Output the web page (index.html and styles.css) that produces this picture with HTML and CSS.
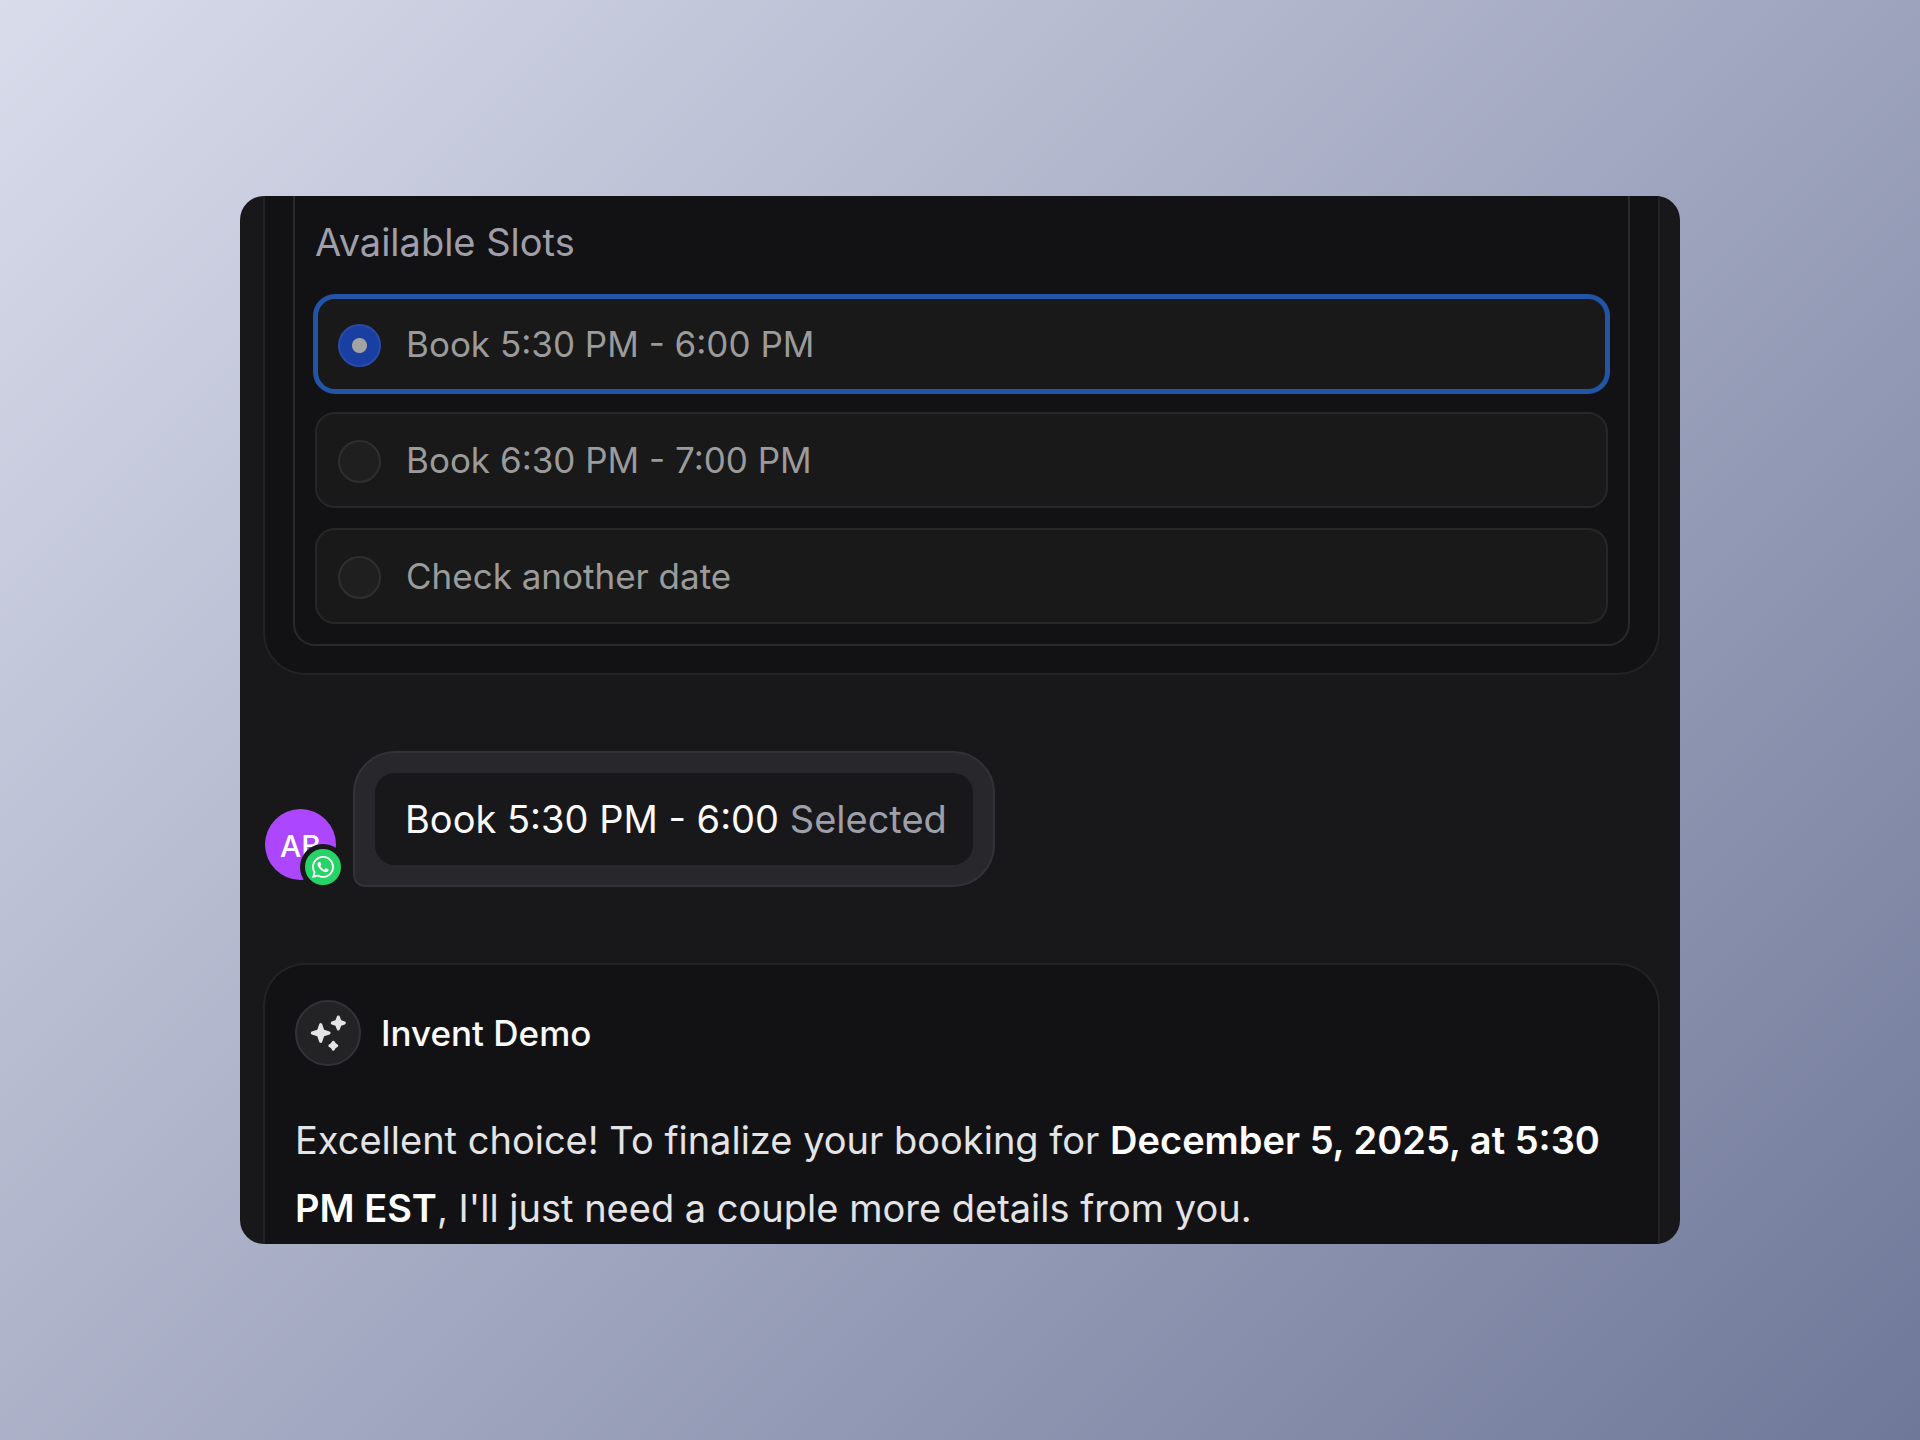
FILE: index.html
```html
<!DOCTYPE html>
<html lang="en">
<head>
  <meta charset="UTF-8" />
  <meta name="viewport" content="width=device-width, initial-scale=1.0" />
  <title>Invent Demo</title>
  <link rel="stylesheet" href="styles.css">
</head>
<body>
  <main class="chat">
    <section class="bubble slots-bubble">
      <fieldset class="slots">
        <legend class="slots-title">Available Slots</legend>
        <label class="slot" for="slot1">
          <input type="radio" id="slot1" name="slot" checked>
          <span>Book 5:30 PM - 6:00 PM</span>
        </label>
        <label class="slot" for="slot2">
          <input type="radio" id="slot2" name="slot">
          <span>Book 6:30 PM - 7:00 PM</span>
        </label>
        <label class="slot" for="slot3">
          <input type="radio" id="slot3" name="slot">
          <span>Check another date</span>
        </label>
      </fieldset>
    </section>

    <section class="reply">
      <div class="avatar">
        AB
        <span class="badge">
          <svg viewBox="0 0 24 24" fill="#fff">
            <path d="M17.472 14.382c-.297-.149-1.758-.867-2.03-.967-.273-.099-.471-.148-.67.15-.197.297-.767.966-.94 1.164-.173.199-.347.223-.644.075-.297-.15-1.255-.463-2.39-1.475-.883-.788-1.48-1.761-1.653-2.059-.173-.297-.018-.458.13-.606.134-.133.298-.347.446-.52.149-.174.198-.298.298-.497.099-.198.05-.371-.025-.52-.075-.149-.669-1.612-.916-2.207-.242-.579-.487-.5-.669-.51-.173-.008-.371-.01-.57-.01-.198 0-.52.074-.792.372-.272.297-1.04 1.016-1.04 2.479 0 1.462 1.065 2.875 1.213 3.074.149.198 2.096 3.2 5.077 4.487.709.306 1.262.489 1.694.625.712.227 1.36.195 1.871.118.571-.085 1.758-.719 2.006-1.413.248-.694.248-1.289.173-1.413-.074-.124-.272-.198-.57-.347m-5.421 7.403h-.004a9.87 9.87 0 01-5.031-1.378l-.361-.214-3.741.982.998-3.648-.235-.374a9.86 9.86 0 01-1.51-5.26c.001-5.45 4.436-9.884 9.888-9.884 2.64 0 5.122 1.03 6.988 2.898a9.825 9.825 0 012.893 6.994c-.003 5.45-4.437 9.884-9.885 9.884m8.413-18.297A11.815 11.815 0 0012.05 0C5.495 0 .16 5.335.157 11.892c0 2.096.547 4.142 1.588 5.945L.057 24l6.305-1.654a11.882 11.882 0 005.683 1.448h.005c6.554 0 11.89-5.335 11.893-11.893a11.821 11.821 0 00-3.48-8.413z"/>
          </svg>
        </span>
      </div>
      <div class="reply-bubble">
        <p class="reply-text">Book 5:30 PM - 6:00 <span class="muted">Selected</span></p>
      </div>
    </section>

    <section class="bubble message">
      <header class="sender">
        <span class="sender-icon">
          <svg viewBox="0 0 36 36" fill="#e4e4e7" stroke="#e4e4e7" stroke-width="3" stroke-linejoin="round">
            <path d="M10.700 9.600L12.900 15.800L19.100 18L12.900 20.200L10.700 26.400L8.500 20.200L2.300 18L8.500 15.800Z"/>
            <path d="M28.300 2L30 6.300L34.300 8L30 9.700L28.300 14L26.600 9.700L22.300 8L26.600 6.300Z"/>
            <path d="M23.300 27.300L24.600 29.400L26.700 30.700L24.600 32L23.300 34.100L22 32L19.900 30.700L22 29.400Z"/>
          </svg>
        </span>
        <h2 class="sender-name">Invent Demo</h2>
      </header>
      <p class="message-text">Excellent choice! To finalize your booking for <strong>December 5, 2025, at 5:30 PM EST</strong>, I'll just need a couple more details from you.</p>
    </section>
  </main>
</body>
</html>
```
FILE: styles.css
```css
* {
  box-sizing: border-box;
}

body {
  margin: 0;
  height: 100vh;
  padding: 196px 240px;
  display: flex;
  font-family: Inter, "Liberation Sans", sans-serif;
  font-optical-sizing: none;
  background: linear-gradient(135deg, #d9dceb, #6f7899);
}

h2, p {
  margin: 0;
}

.chat {
  flex: 1;
  display: flex;
  flex-direction: column;
  gap: 76px;
  padding: 0 20px 0 23px;
  overflow: hidden;
  background-color: #18181a;
  border-radius: 24px;
}

.bubble {
  background-color: #121214;
  border: 2px solid #232325;
}

/* first and last bubbles run past the edge of the chat */
.slots-bubble {
  border-top: none;
  border-radius: 0 0 42px 42px;
  padding: 0 28px 27px;
}

.slots {
  display: flex;
  flex-direction: column;
  gap: 20px;
  margin: 0;
  padding: 0 20px 20px;
  border: 2px solid #2a2a2d;
  border-top: none;
  border-radius: 0 0 22px 22px;
}

/* float takes the legend off the fieldset border */
.slots-title {
  float: left;
  padding: 20px 0 8px;
  font-size: 38px;
  line-height: 52px;
  color: #9f9fa9;
}

.slot {
  display: flex;
  align-items: center;
  gap: 25px;
  height: 96px;
  padding: 0 21px;
  border: 2px solid #27272a;
  border-radius: 20px;
  background-color: #191919;
  font-size: 35px;
  color: #9b9b9b;
}

.slot:has(input:checked) {
  border: 3px solid #2255a7;
  padding: 0 20px;
  box-shadow: 0 0 0 2px #2255a7;
}

.slot input {
  appearance: none;
  width: 43px;
  height: 43px;
  margin: 2px 0 0;
  border: 2px solid #2f2f31;
  border-radius: 50%;
  background-color: #1f1f1f;
}

.slot input:checked {
  border-color: #2a4aa5;
  background: radial-gradient(circle, #a3a3a3 7px, #193fa3 8px);
}

.reply {
  display: flex;
  align-items: flex-end;
  gap: 17px;
}

.avatar {
  position: relative;
  width: 71px;
  height: 71px;
  margin: 0 0 7px 2px;
  border-radius: 50%;
  background-color: #ad46ff;
  color: #fff;
  font-size: 30px;
  font-weight: 500;
  line-height: 74px;
  text-align: center;
}

.badge {
  position: absolute;
  right: -10px;
  bottom: -10px;
  display: flex;
  align-items: center;
  justify-content: center;
  width: 46px;
  height: 46px;
  border: 5px solid #18181a;
  border-radius: 50%;
  background-color: #25d366;
}

.badge svg {
  width: 22px;
  height: 22px;
}

.reply-bubble {
  padding: 20px;
  border: 2px solid #323238;
  border-radius: 42px 42px 42px 12px;
  background-color: #28282c;
}

.reply-text {
  padding: 20px 26px 20px 30px;
  border-radius: 20px;
  background-color: #18181a;
  color: #fafafa;
  font-size: 38px;
  line-height: 52px;
}

.muted {
  color: #9f9fa9;
}

.message {
  flex: 1;
  border-bottom: none;
  border-radius: 42px 42px 0 0;
  padding: 35px 30px 0;
}

.sender {
  display: flex;
  align-items: center;
  gap: 20px;
  margin-bottom: 40px;
}

.sender-icon {
  display: flex;
  align-items: center;
  justify-content: center;
  width: 66px;
  height: 66px;
  border: 2px solid #323238;
  border-radius: 50%;
  background-color: #232325;
}

.sender-icon svg {
  width: 36px;
  height: 36px;
}

.sender-name {
  font-size: 35px;
  font-weight: 500;
  color: #fafafa;
}

.message-text {
  font-size: 38px;
  line-height: 68px;
  color: #e4e4e7;
}

.message-text strong {
  font-weight: 600;
  color: #fff;
}
```
